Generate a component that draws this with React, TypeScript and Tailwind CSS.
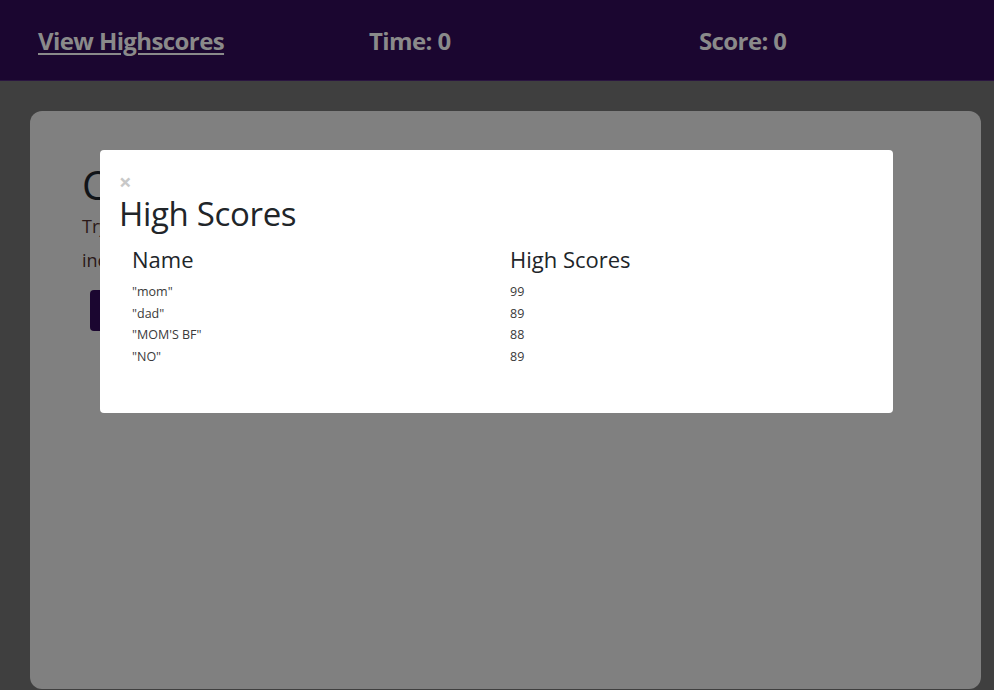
import React from 'react';

const scores = [
    { name: '"mom"', score: 99 },
    { name: '"dad"', score: 89 },
    { name: '"MOM\'S BF"', score: 88 },
    { name: '"NO"', score: 89 },
];

export default function App() {
    return (
        <div className="relative h-[690px] w-[994px] overflow-hidden bg-[#3f3f3f] font-['Open_Sans',sans-serif]">
            <header className="flex h-[81px] items-center border-b border-[#2a1540] bg-[#1b0630] pt-[2px] text-[24px] font-bold tracking-[-0.025em] text-[#8a8a8a]">
                <a className="ml-[38px] w-[331px] underline underline-offset-[3px]">View Highscores</a>
                <span className="w-[330px]">Time: 0</span>
                <span>Score: 0</span>
            </header>

            <main className="ml-[30px] mr-[13px] mt-[30px] h-[578px] rounded-xl bg-[#808080] pl-[52px] pr-[80px] pt-[50px]">
                <h1 className="text-[40px] leading-[48px] text-[#111418]">Coding Quiz Challenge</h1>
                <p className="text-[18px] leading-[34px] text-[#2a1818]">
                    Try to answer the following code-related questions within the time limit. Keep in mind that
                    incorrect answers will penalize your score/time by ten seconds!
                </p>
                <button className="ml-2 mt-[13px] h-[41px] w-[140px] rounded bg-[#1b0630] text-[#808080]">
                    Start Quiz
                </button>
            </main>

            <HighScoresModal />
        </div>
    );
}

function HighScoresModal() {
    return (
        <div className="absolute left-[100px] top-[150px] h-[263px] w-[793px] rounded bg-white px-[19px] pt-[24px] text-[#212529]">
            <div className="h-[20px] text-[22px] font-bold leading-[14px] text-[#c8c8c8]">×</div>
            <h2 className="text-[33px] leading-[40px] tracking-[-0.01em]">High Scores</h2>
            <table className="mt-[12px] w-[756px] table-fixed text-left">
                <thead>
                    <tr>
                        <th className="pb-[9px] pl-[13px] text-[22px] font-normal leading-[26px]">Name</th>
                        <th className="pb-[9px] pl-[13px] text-[22px] font-normal leading-[26px]">High Scores</th>
                    </tr>
                </thead>
                <tbody className="text-[12.5px] leading-[21.5px] text-[#3a3a3a]">
                    {scores.map((row, index) => (
                        <tr key={index}>
                            <td className="pl-[13px]">{row.name}</td>
                            <td className="pl-[13px]">{row.score}</td>
                        </tr>
                    ))}
                </tbody>
            </table>
        </div>
    );
}
